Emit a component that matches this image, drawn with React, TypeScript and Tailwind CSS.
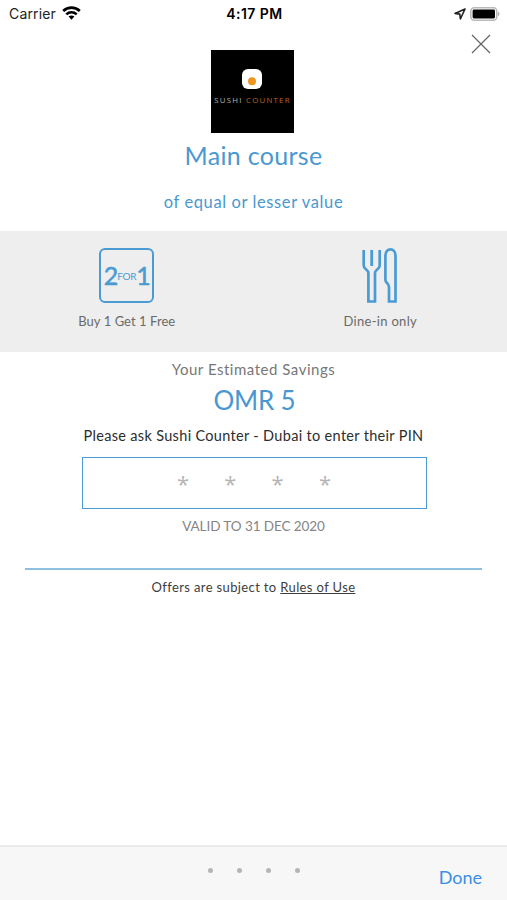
import { useState } from "react"

const PIN_LENGTH = 4

function StatusBar() {
  return (
    <div className="grid h-7 grid-cols-3 items-center pl-[9px] pr-[7px] font-['Inter',sans-serif] text-black">
      <div className="flex items-center gap-1.5 text-[14px] leading-7">
        <span className="tracking-[0.15px] text-[#222]">Carrier</span>
        <svg width="19" height="14" viewBox="0 0 19 14" fill="none" className="-mt-0.5">
          <path d="M1.2 5C6 0.6 13 0.6 17.8 5" stroke="black" strokeWidth="2.8" />
          <path d="M4.3 8.4C7.3 5.6 11.7 5.6 14.7 8.4" stroke="black" strokeWidth="2.6" />
          <path d="M6.6 10.6C8.3 9.1 10.7 9.1 12.4 10.6L9.5 13.7Z" fill="black" />
        </svg>
      </div>
      <div className="text-center text-[14px] font-semibold leading-7 tracking-[0.45px]">
        4:17 PM
      </div>
      <div className="flex items-center justify-end gap-1">
        <svg width="12" height="12" viewBox="0 0 12 12" fill="none">
          <path
            d="M11 1L1 5.4L5.8 6.1L6.4 11Z"
            stroke="#222"
            strokeWidth="1.6"
            strokeLinejoin="round"
          />
        </svg>
        <svg width="30" height="14" viewBox="0 0 30 14" fill="none">
          <rect x="0.8" y="0.8" width="26" height="12.4" rx="3.4" stroke="#b9b9b9" strokeWidth="1.6" />
          <rect x="2.6" y="2.6" width="22.4" height="8.8" rx="1.4" fill="black" />
          <path d="M28 4.8C30 5.5 30 8.5 28 9.2Z" fill="#b5b5b5" />
        </svg>
      </div>
    </div>
  )
}

function Logo() {
  return (
    <div className="-ml-[3px] flex h-[83px] w-[83px] flex-col items-center bg-black pt-[19px]">
      <svg width="20" height="20" viewBox="0 0 20 20">
        <rect width="20" height="20" rx="6" fill="white" />
        <circle cx="10" cy="12.3" r="4" fill="#ee9420" />
      </svg>
      <div className="mt-[5px] whitespace-nowrap pl-px font-['Open_Sans',sans-serif] text-[7.8px] leading-[12px] tracking-[1.25px] text-[#b3b3b3]">
        SUSHI <span className="text-[#b96a25]">COUNTER</span>
      </div>
    </div>
  )
}

function TwoForOneIcon() {
  return (
    <div className="flex h-[55px] w-[55px] items-center justify-center rounded-[6px] border-2 border-[#4a9bd3] text-[#4a9bd3]">
      <span className="text-[25px] leading-none tracking-[-1px] [-webkit-text-stroke:0.5px_#4a9bd3]">
        2
      </span>
      <span className="text-[10px] leading-none tracking-[-0.3px]">FOR</span>
      <span className="text-[25px] leading-none tracking-[-1px] [-webkit-text-stroke:0.5px_#4a9bd3]">
        1
      </span>
    </div>
  )
}

function CutleryIcon() {
  return (
    <svg width="38" height="55" viewBox="0 0 38 55" fill="none" stroke="#4a9bd3" strokeWidth="2.7">
      <path d="M2.7 2V17.5C2.7 21.5 7.4 21.5 7.4 25V53.5H14V25C14 21.5 18.7 21.5 18.7 17.5V2" />
      <path d="M10.7 2V18" strokeWidth="2.8" />
      <path d="M34.5 53.5V7.5C34.5 -0.6 24.4 -0.6 24.4 7.5V32C24.4 35 28 35 28 39V53.5Z" />
    </svg>
  )
}

export default function App() {
  const [pin] = useState("")
  const slots = Array.from({ length: PIN_LENGTH })

  return (
    <div className="flex h-[900px] w-[507px] flex-col overflow-hidden bg-white font-['Lato',sans-serif]">
      <StatusBar />
      <header className="grid h-[105px] grid-cols-3">
        <div />
        <div className="flex justify-center pt-[22px]">
          <Logo />
        </div>
        <button aria-label="Close" className="mr-4 mt-1.5 h-5 w-5 justify-self-end">
          <svg width="20" height="20" viewBox="0 0 20 20" stroke="#666" strokeWidth="1.2">
            <path d="M1 1L19 19M19 1L1 19" />
          </svg>
        </button>
      </header>

      <div className="flex h-[98px] flex-col items-center text-[#4a98d0]">
        <h1 className="mt-1.5 text-[25px] leading-8 tracking-[0.3px]">Main course</h1>
        <p className="mt-[19px] text-[16.5px] leading-6 tracking-[0.6px]">
          of equal or lesser value
        </p>
      </div>

      <section className="grid h-[121px] grid-cols-2 bg-[#eeeeee] pt-[17px] text-[13px] text-[#6a6a6a]">
        <div className="flex flex-col items-center">
          <TwoForOneIcon />
          <span className="mt-2 leading-5 tracking-[0.05px]">Buy 1 Get 1 Free</span>
        </div>
        <div className="flex flex-col items-center">
          <CutleryIcon />
          <span className="mt-2 leading-5 tracking-[0.3px]">Dine-in only</span>
        </div>
      </section>

      <main className="flex flex-col items-center">
        <div className="mt-[7px] text-[15px] leading-5 tracking-[0.52px] text-[#777]">
          Your Estimated Savings
        </div>
        <div className="mt-[5px] pl-0.5 text-[26px] leading-8 tracking-[-0.2px] text-[#4a98d0]">
          OMR 5
        </div>
        <div className="mt-2.5 whitespace-nowrap text-[14.5px] leading-5 tracking-[0.32px] text-[#2d2d2d]">
          Please ask Sushi Counter - Dubai to enter their PIN
        </div>
        <div className="ml-px mt-[11px] flex h-[52px] w-[345px] items-center justify-center border border-[#4a9bd3] text-[#b5b5b5]">
          {slots.map((_, i) => (
            <span
              key={i}
              className="w-[47.3px] text-center font-['Open_Sans',sans-serif] text-[22px] leading-8"
            >
              {pin[i] ?? "*"}
            </span>
          ))}
        </div>
        <div className="mt-[7px] text-[13.5px] leading-5 tracking-[-0.08px] text-[#858585]">
          VALID TO 31 DEC 2020
        </div>
      </main>

      <footer className="mx-[25px] mt-8 border-t-2 border-[#8fbfe0] pt-[7px] text-center text-[13px] leading-5 tracking-[0.37px] text-[#3d3d3d]">
        Offers are subject to <a className="underline">Rules of Use</a>
      </footer>

      <div className="mt-auto grid h-[55px] grid-cols-3 border-t-2 border-[#ebebeb] bg-[#f7f7f7]">
        <div />
        <div className="flex justify-center gap-6 pt-[21px]">
          {slots.map((_, i) => (
            <span key={i} className="h-[5px] w-[5px] rounded-full bg-[#b5b5b5]" />
          ))}
        </div>
        <button className="mr-[25px] mt-4 justify-self-end self-start text-[18px] leading-7 text-[#3b8ee6]">
          Done
        </button>
      </div>
    </div>
  )
}
